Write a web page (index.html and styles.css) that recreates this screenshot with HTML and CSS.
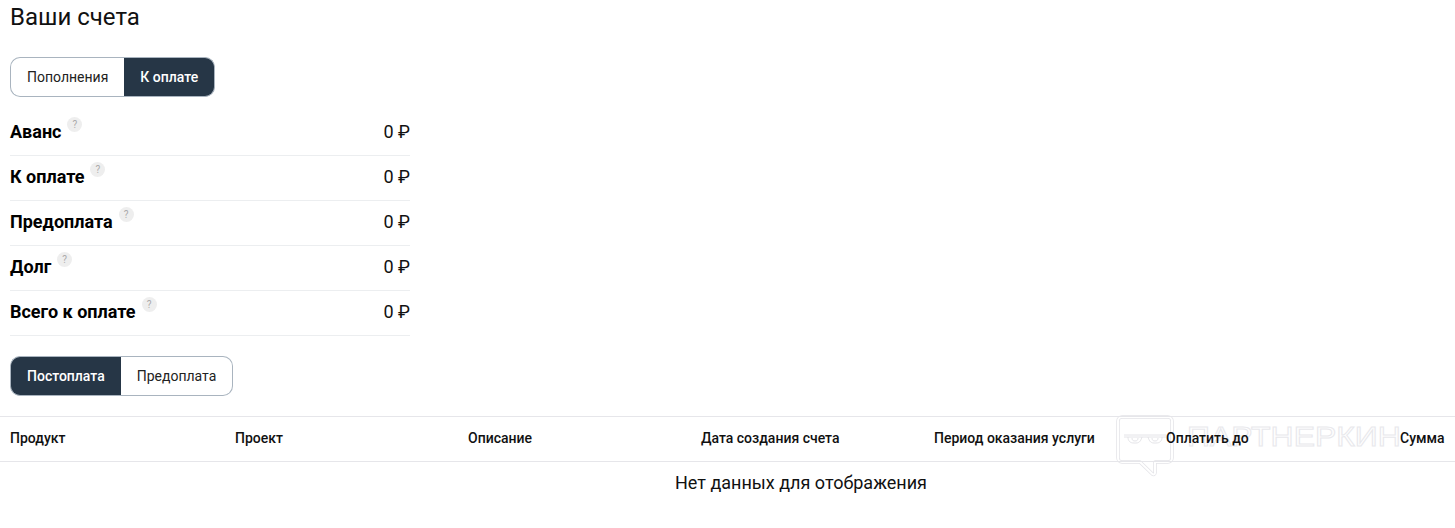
FILE: index.html
```html
<!DOCTYPE html>
<html lang="ru">
  <head>
    <meta charset="UTF-8" />
    <title>Ваши счета</title>
    <link rel="stylesheet" href="styles.css">
  </head>
  <body>
    <h1 class="title">Ваши счета</h1>

    <div class="tabs tabs_top">
      <button class="tab tab_first">Пополнения</button>
      <button class="tab tab_active">К оплате</button>
    </div>

    <div class="summary">
      <div class="row">
        <div class="row_name">Аванс<span class="hint">?</span></div>
        <div class="row_value">0 ₽</div>
      </div>
      <div class="row">
        <div class="row_name">К оплате<span class="hint">?</span></div>
        <div class="row_value">0 ₽</div>
      </div>
      <div class="row">
        <div class="row_name">Предоплата<span class="hint">?</span></div>
        <div class="row_value">0 ₽</div>
      </div>
      <div class="row">
        <div class="row_name">Долг<span class="hint">?</span></div>
        <div class="row_value">0 ₽</div>
      </div>
      <div class="row">
        <div class="row_name">Всего к оплате<span class="hint">?</span></div>
        <div class="row_value">0 ₽</div>
      </div>
    </div>

    <div class="tabs tabs_bottom">
      <button class="tab tab_active">Постоплата</button>
      <button class="tab tab_last">Предоплата</button>
    </div>

    <div class="table_head">
      <div>Продукт</div>
      <div>Проект</div>
      <div>Описание</div>
      <div>Дата создания счета</div>
      <div>Период оказания услуги</div>
      <div>Оплатить до</div>
      <div>Сумма</div>
    </div>
    <div class="table_empty">Нет данных для отображения</div>

    <!-- watermark, sits under the table text -->
    <div class="watermark">
      <svg class="watermark_logo" width="58" height="62" viewBox="0 0 58 62" fill="none" stroke-linejoin="round">
        <path class="logo_out" d="M5 2h46a4 4 0 0 1 4 4v37a4 4 0 0 1-4 4H38v11a1.5 1.5 0 0 1-2.6 1L23 47H5a4 4 0 0 1-4-4V6a4 4 0 0 1 4-4z" transform="translate(1 0)" />
        <path class="logo_in" d="M5 2h46a4 4 0 0 1 4 4v37a4 4 0 0 1-4 4H38v11a1.5 1.5 0 0 1-2.6 1L23 47H5a4 4 0 0 1-4-4V6a4 4 0 0 1 4-4z" transform="translate(1 0)" />
        <path class="logo_thin" d="M8 20h42M8 22h42" />
        <path class="logo_thin" d="M12 22c0 4 2 6 6 6h2c4 0 5-3 6-6M32 22c1 3 2 6 6 6h2c4 0 6-2 6-6" />
        <path class="logo_thin" d="M16 23c0 2 1 3 3 3s3-1 3-3M36 23c0 2 1 3 3 3s3-1 3-3" />
      </svg>
      <span class="watermark_text">ПАРТНЕРКИН</span>
    </div>
  </body>
</html>
```

FILE: styles.css
```css
* {
  box-sizing: border-box;
  padding: 0;
  margin: 0;
}
html {
  background-color: #fff;
}
body {
  position: relative;
  font-family: Roboto, "Liberation Sans", sans-serif;
  font-size: 14px;
  color: #111;
  min-height: 528px;
  overflow: hidden;
}

.title {
  font-size: 24px;
  font-weight: 400;
  line-height: 28px;
  padding: 3px 10px 0;
  height: 57px;
}

.tabs {
  display: flex;
  width: fit-content;
  height: 40px;
  margin-left: 10px;
}
.tabs_bottom {
  margin-top: 20px;
}
.tab {
  font-family: inherit;
  font-size: 14px;
  padding: 0 16px;
  background: #fff;
  color: #222;
  border: 1px solid #a9b4bf;
}
.tab_first {
  border-right: none;
  border-radius: 10px 0 0 10px;
}
.tab_last {
  border-left: none;
  border-radius: 0 10px 10px 0;
}
.tab_active {
  background-color: #263646;
  color: #fff;
  font-weight: 500;
}
.tabs_top .tab_active {
  border-radius: 0 10px 10px 0;
  border-left: none;
}
.tabs_bottom .tab_active {
  border-radius: 10px 0 0 10px;
  border-right: none;
}

.summary {
  width: 400px;
  margin-left: 10px;
  margin-top: 14px;
}
.row {
  display: flex;
  justify-content: space-between;
  align-items: center;
  height: 45px;
  padding-bottom: 4px;
  border-bottom: 1px solid #eceef0;
  font-size: 18px;
}
.row_name {
  display: flex;
  font-weight: 700;
  font-size: 18px;
  color: #000;
}
.hint {
  width: 15px;
  height: 15px;
  margin-left: 6px;
  margin-top: -4px;
  border-radius: 50%;
  background-color: #eee;
  color: #aaa;
  font-size: 10px;
  font-weight: 400;
  line-height: 15px;
  text-align: center;
}

.table_head {
  position: relative;
  z-index: 1;
  display: grid;
  grid-template-columns: 225px 233px 233px 233px 232px 234px 1fr;
  align-items: center;
  height: 46px;
  margin-top: 20px;
  padding-left: 10px;
  padding-bottom: 2px;
  border-top: 1px solid #e6e6ea;
  border-bottom: 1px solid #e6e6ea;
  font-size: 14px;
  font-weight: 500;
}
.table_empty {
  padding-left: 147px;
  margin-top: 9px;
  font-size: 18px;
  line-height: 24px;
  text-align: center;
}

.watermark {
  position: absolute;
  left: 1116px;
  top: 415px;
  display: flex;
  align-items: flex-start;
}
.logo_out {
  stroke: #e4e4e8;
  stroke-width: 3.5;
}
.logo_in {
  stroke: #fff;
  stroke-width: 2;
}
.logo_thin {
  stroke: #e4e4e8;
  stroke-width: 1;
}
.watermark_text {
  display: inline-block;
  margin-left: 13px;
  margin-top: 2px;
  font-family: "Liberation Sans", sans-serif;
  font-size: 28px;
  line-height: 40px;
  color: transparent;
  -webkit-text-stroke: 1px #e8e8ec;
  white-space: nowrap;
  transform: scaleX(1.14);
  transform-origin: left center;
}
```
